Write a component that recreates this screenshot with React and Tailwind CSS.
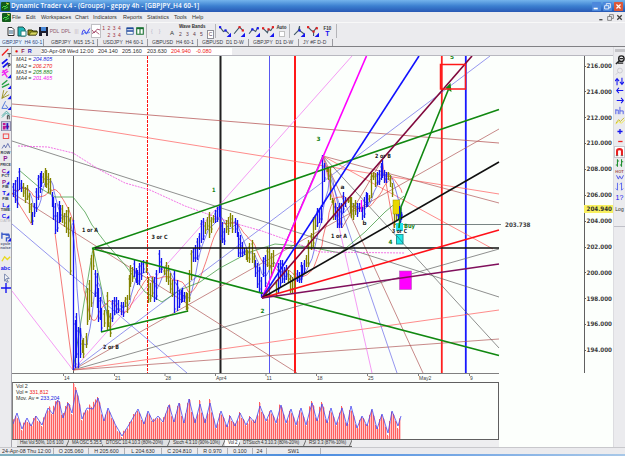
import React from 'react';

const MENUS = [
  { label: 'File', width: 'w-[14px]' },
  { label: 'Edit', width: 'w-[15px]' },
  { label: 'Workspaces', width: 'w-[34px]' },
  { label: 'Chart', width: 'w-[18px]' },
  { label: 'Indicators', width: 'w-[30px]' },
  { label: 'Reports', width: 'w-[24px]' },
  { label: 'Statistics', width: 'w-[27px]' },
  { label: 'Tools', width: 'w-[18px]' },
  { label: 'Help', width: 'w-[14px]' },
];

const TABS = [
  { label: 'GBPJPY  H4 60-1', width: 'w-[44px]', active: true },
  { label: 'GBPJPY  M15 15-1', width: 'w-[54px] pl-[7px]' },
  { label: 'USDJPY  H4 60-1', width: 'w-[50px] pl-[5px]' },
  { label: 'GBPUSD  H4 60-1', width: 'w-[50px] pl-[4px]' },
  { label: 'GBPUSD  D1 D-W', width: 'w-[51px] pl-[4px]' },
  { label: 'GBPJPY  D1 D-W', width: 'w-[50px] pl-[4px]' },
  { label: 'JY #F D-D', width: 'w-[34px] pl-[4px]' },
];

const B = '#1414f0';
const O = '#848400';
const M = '#ff00ff';

// x, high, low, colour
const BARS = [
  [13, 183, 197, B], [15, 180, 203, B], [17, 177, 208, B], [19, 168, 190, B], [21, 180, 192, B], [23, 183, 197, O],
  [25, 187, 203, O], [27, 185, 200, O], [29, 193, 213, O], [31, 203, 223, O], [32, 212, 225, B], [34, 203, 217, B],
  [36, 188, 212, B], [38, 175, 200, B], [40, 173, 193, B], [41, 171, 187, B], [43, 173, 183, O], [45, 168, 187, O],
  [46, 170, 188, O], [48, 173, 193, O], [50, 178, 194, O], [52, 192, 207, B], [53, 197, 220, B], [55, 203, 234, B],
  [57, 212, 232, B], [59, 201, 223, B], [60, 205, 222, B], [62, 205, 223, O], [64, 213, 227, O], [66, 210, 233, O],
  [68, 207, 237, O], [70, 217, 275, O], [73, 220, 370, B], [75, 320, 368, B], [76, 313, 358, B], [78, 327, 368, B],
  [80, 328, 358, B], [82, 340, 353, O], [83, 338, 358, O], [86, 333, 348, O], [87, 288, 325, O], [89, 280, 320, O],
  [91, 255, 307, O], [93, 248, 270, O], [95, 270, 297, B], [97, 273, 308, B], [98, 288, 322, B], [100, 297, 320, B],
  [101, 308, 332, B], [104, 310, 327, O], [107, 292, 330, O], [108, 310, 327, O], [110, 313, 337, O], [112, 300, 322, B],
  [114, 297, 315, B], [116, 297, 313, B], [118, 300, 313, B], [121, 302, 315, B], [123, 302, 317, B], [125, 297, 307, O],
  [127, 295, 313, O], [129, 275, 300, O], [130, 265, 287, O], [132, 267, 282, O], [134, 260, 277, B], [136, 268, 283, B],
  [137, 270, 285, B], [139, 263, 285, B], [141, 262, 280, B], [143, 260, 273, B], [146, 260, 273, O], [148, 277, 303, O],
  [150, 283, 302, O], [152, 277, 297, O], [154, 277, 302, B], [156, 270, 300, B], [159, 250, 273, B], [161, 258, 273, B],
  [164, 267, 275, O], [166, 262, 282, O], [168, 265, 285, O], [170, 273, 293, O], [172, 280, 297, O], [174, 270, 313, B],
  [177, 280, 311, B], [179, 290, 308, B], [181, 290, 303, B], [182, 288, 302, B], [184, 292, 302, B], [186, 292, 310, O],
  [187, 293, 312, O], [189, 270, 302, O], [191, 250, 280, O], [193, 248, 262, B], [195, 245, 262, B], [197, 238, 260, B],
  [199, 233, 250, B], [201, 220, 243, B], [203, 218, 240, B], [205, 222, 234, O], [207, 217, 230, O], [209, 212, 238, O],
  [211, 217, 233, O], [213, 215, 223, O], [215, 210, 223, B], [217, 207, 222, B], [219, 205, 217, B], [220, 204, 240, B],
  [222, 222, 243, B], [224, 228, 245, B], [226, 220, 233, O], [228, 217, 235, O], [230, 213, 227, O], [232, 215, 233, O],
  [235, 218, 233, B], [237, 220, 237, B], [238, 232, 257, B], [240, 235, 257, B], [242, 242, 257, B], [244, 248, 255, B],
  [246, 248, 260, O], [247, 250, 262, O], [249, 243, 263, O], [252, 240, 263, O], [254, 253, 267, O], [255, 260, 277, B],
  [257, 263, 288, B], [259, 267, 293, B], [261, 277, 297, B], [263, 257, 277, B], [265, 255, 287, B], [267, 247, 267, O],
  [269, 248, 270, O], [271, 253, 277, O], [273, 250, 267, O], [276, 280, 297, O], [278, 263, 293, B], [280, 260, 287, B],
  [282, 260, 283, B], [284, 267, 283, B], [286, 265, 280, B], [288, 270, 283, O], [290, 275, 293, O], [292, 277, 293, O],
  [294, 270, 290, O], [297, 270, 282, B], [299, 272, 283, B], [301, 262, 283, B], [302, 265, 277, B], [304, 260, 273, B],
  [306, 255, 267, O], [308, 240, 267, O], [311, 233, 250, O], [313, 217, 247, O], [315, 215, 230, O], [317, 208, 227, B],
  [319, 208, 223, B], [321, 205, 223, B], [322, 155, 207, B], [324, 163, 182, B], [327, 167, 172, O], [328, 167, 180, O],
  [330, 168, 200, O], [332, 198, 203, O], [333, 200, 220, O], [335, 203, 220, B], [337, 207, 228, B], [339, 203, 228, B],
  [341, 203, 228, B], [343, 192, 213, B], [345, 197, 207, B], [348, 197, 203, O], [350, 197, 213, O], [351, 197, 218, O],
  [353, 203, 220, O], [355, 200, 215, O], [357, 203, 217, B], [359, 203, 212, B], [361, 200, 212, M], [362, 207, 220, B],
  [364, 197, 218, B], [366, 192, 207, B], [367, 193, 207, B], [369, 195, 202, O], [371, 173, 198, O], [373, 172, 180, O],
  [375, 173, 187, O], [377, 172, 185, B], [379, 170, 185, B], [381, 163, 180, B], [382, 160, 178, B], [384, 170, 183, B],
  [386, 172, 183, B], [388, 172, 180, O], [390, 175, 187, O], [392, 183, 197, O], [394, 200, 228, O], [396, 203, 220, O],
  [398, 207, 220, B], [400, 208, 225, B], [401, 212, 220, B],
];

const average = (size) =>
  BARS.map((bar, i) => {
    const from = Math.max(0, i - size + 1);
    const part = BARS.slice(from, i + 1);
    const mid = part.reduce((sum, b) => sum + (b[1] + b[2]) / 2, 0) / part.length;
    return `${bar[0] + 1},${mid.toFixed(1)}`;
  }).join(' ');

// x1, y1, x2, y2, colour
const THIN_LINES = [
  [12, 104, 499, 143, '#b04848'],
  [12, 116, 499, 194, '#ff5a5a'],
  [12, 141, 499, 297, '#606060'],
  [12, 193, 297, 373, '#b05858'],
  [12, 224, 187, 373, '#6868e8'],
  [12, 291, 73, 370, '#f070f0'],
  [73, 370, 352, 56, '#f070f0'],
  [73, 370, 490, 56, '#6868e8'],
  [73, 370, 499, 129, '#b05858'],
  [73, 370, 499, 249, '#606060'],
  [73, 370, 499, 310, '#ff5a5a'],
  [73, 370, 499, 339, '#b05858'],
  [55, 233, 73, 370, '#f04040'],
  [73, 370, 93, 248, '#309030'],
  [93, 248, 111, 334, '#309030'],
  [12, 193, 32, 225, '#f04040'],
  [262, 298, 323, 155, '#309030'],
  [323, 156, 499, 348, '#606060'],
  [323, 156, 499, 203, '#b05858'],
  [323, 156, 493, 249, '#ff5a5a'],
  [323, 156, 423, 373, '#b05858'],
  [323, 156, 397, 373, '#6868e8'],
  [323, 156, 372, 373, '#f070f0'],
  [323, 156, 342, 228, '#f04040'],
  [342, 228, 382, 160, '#b04848'],
  [382, 160, 394, 228, '#f04040'],
  [395, 224.5, 501, 224.5, '#405050'],
];

const THICK_LINES = [
  [92, 248.5, 499, 109.5, '#108810'],
  [92, 248.5, 499, 355.5, '#108810'],
  [101, 332, 188, 311, '#108810'],
  [95, 248, 499, 248, '#101010'],
  [262, 298, 366.5, 56, '#ff00ff'],
  [262, 298, 419, 56, '#1010ff'],
  [262, 298, 472, 56, '#80083c'],
  [262, 298, 499, 162, '#101010'],
  [262, 298, 499, 230, '#ff1018'],
  [262, 298, 499, 264, '#80105c'],
  [399, 228, 401, 207, '#108810'],
  [401, 207, 449, 88, '#108810'],
];

const LABELS = [
  ['1 or A', 82, 232, 16, '#202020'],
  ['2 or B', 103, 349, 16, '#202020'],
  ['3 or C', 151.5, 238.5, 16, '#202020'],
  ['1', 212, 192, 3.5, '#108010'],
  ['2', 260.5, 313, 4, '#108010'],
  ['3', 316.5, 141, 4, '#108010'],
  ['a', 340.5, 189, 4, '#202020'],
  ['b', 362.5, 225, 4, '#202020'],
  ['1 or A', 331, 237.5, 16, '#202020'],
  ['2 or B', 375, 158, 16, '#202020'],
  ['3 or C', 392, 233, 15, '#202020'],
  ['4', 388.5, 243.5, 4, '#108010'],
  ['5', 450, 58.5, 4, '#108010'],
  ['Buy', 404, 228, 11, '#108010'],
];

const PRICES = [216, 214, 212, 210, 208, 206, 204, 202, 200, 198, 196, 194];

const DATES = [
  ['14', 64], ['21', 115], ['28', 165.5], ['Apr4', 216], ['11', 266.5],
  ['18', 317], ['25', 368], ['May2', 419], ['9', 470],
];

// x, y of the volume average
const VOLUME = [
  [13, 424], [17, 413], [22, 429], [27, 418], [31, 426], [36, 416], [42, 425], [48, 408], [53, 414], [57, 401],
  [59, 401], [63, 418], [68, 403], [72, 413], [76, 390], [78, 396], [82, 419], [87, 408], [93, 409], [98, 398],
  [104, 421], [108, 408], [115, 424], [122, 436], [130, 423], [138, 409], [144, 424], [148, 411], [153, 422], [158, 416],
  [163, 422], [169, 405], [174, 422], [179, 403], [184, 423], [189, 399], [195, 423], [200, 404], [205, 423], [210, 403],
  [216, 428], [221, 411], [227, 427], [230, 416], [235, 426], [240, 413], [246, 425], [250, 417], [255, 423], [260, 406],
  [266, 421], [271, 410], [276, 423], [281, 405], [286, 423], [291, 409], [296, 425], [301, 408], [306, 425], [312, 403],
  [317, 421], [322, 404], [327, 423], [331, 408], [336, 425], [342, 408], [347, 426], [351, 406], [357, 428], [362, 416],
  [367, 426], [372, 409], [377, 429], [382, 414], [388, 433], [392, 411], [398, 426], [401, 416],
];

const volumeAt = (x) => {
  const i = Math.max(1, VOLUME.findIndex((p) => p[0] >= x));
  const [x1, y1] = VOLUME[i - 1];
  const [x2, y2] = VOLUME[i];
  return y1 + ((y2 - y1) * (x - x1)) / (x2 - x1);
};

const VOLUME_BARS = Array.from({ length: 194 }, (_, i) => {
  const x = 13 + i * 2;
  const y = volumeAt(x + 1) + ((i * 7) % 5) - 2;
  return [x, x === 73 ? 383 : y < 410 ? y - 3 : y];
});

const INDICATOR_TABS = [
  { label: 'Hist Vol 50%, 10:6 100', width: 'w-[52px]' },
  { label: 'MA OSC 5.35.5', width: 'w-[34px]' },
  { label: 'DTOSC 10.4.10.3 (80%-20%)', width: 'w-[67px]' },
  { label: 'Stoch 4.3.10 (90%-10%)', width: 'w-[55px]' },
  { label: 'Vol 2', width: 'w-[15px]', active: true },
  { label: 'DTStoch 4.3.10.3 (80%-20%)', width: 'w-[66px]' },
  { label: 'RSI 3.3 (87%-10%)', width: 'w-[46px]' },
];

const STATUS = [
  { label: '24-Apr-08 Thu 12:00', width: 'w-[54px]' },
  { label: 'O 205.060', width: 'w-[35px]' },
  { label: 'H 205.600', width: 'w-[36px]' },
  { label: 'L 204.630', width: 'w-[37px]' },
  { label: 'C 204.810', width: 'w-[36px]' },
  { label: 'R 0.970', width: 'w-[30px]' },
  { label: '0.100', width: 'w-[25px]' },
  { label: '24', width: 'w-[14px]' },
  { label: 'SW1', width: 'w-[54px]' },
];

const Icon = ({ children, className = 'w-[11px] h-[11px]' }) => (
  <svg viewBox="0 0 11 11" className={`shrink-0 ${className}`} fill="none" strokeWidth="1">
    {children}
  </svg>
);

const Corner = () => <path d="M11 7v4H7z" fill="#1414f0" />;

const Logo = () => (
  <svg viewBox="0 0 9 9" className="w-[9px] h-[9px] shrink-0">
    <rect width="9" height="9" rx="1" fill="#145c1c" />
    <path d="M1 6l2-2 1 1 3-3M3 7l4-2" stroke="#48d848" fill="none" />
    <path d="M5 1l3 1" stroke="#d8d840" />
  </svg>
);

const TitleBar = () => (
  <div className="h-[12px] shrink-0 flex items-center bg-gradient-to-b from-[#74b4ec] via-[#3c80d0] to-[#2858b4] pr-[2px]">
    <div className="w-[11px] pl-[1px]"><Logo /></div>
    <div className="text-[6.5px] leading-[10px] font-semibold text-white whitespace-pre tracking-[0.04px] font-['Open_Sans',sans-serif]">
      Dynamic Trader v.4 - (Groups) - geppy 4h - [GBPJPY_H4 60-1]
    </div>
    <div className="ml-auto flex gap-[2px]">
      <Icon className="w-[9px] h-[9px]"><rect width="11" height="11" rx="1" fill="#4c88dc" /><path d="M2 8h5" stroke="#fff" strokeWidth="2" /></Icon>
      <Icon className="w-[9px] h-[9px]"><rect width="11" height="11" rx="1" fill="#4c88dc" /><path d="M4 4V2h5v5H7M2 4.500h5v4H2z" stroke="#fff" /></Icon>
      <Icon className="w-[9px] h-[9px]"><rect width="11" height="11" rx="1" fill="#dc5838" /><path d="M3 3l5 5M8 3l-5 5" stroke="#fff" strokeWidth="1.500" /></Icon>
    </div>
  </div>
);

const MenuBar = () => (
  <div className="h-[10px] shrink-0 flex items-center text-[5.5px] leading-[8px] text-[#303030] pr-[2px]">
    <div className="w-[12px] pl-[2px]"><Logo /></div>
    {MENUS.map((m) => (
      <div key={m.label} className={`${m.width} shrink-0 whitespace-nowrap`}>{m.label}</div>
    ))}
    <div className="ml-auto flex gap-[2px]">
      <Icon className="w-[7px] h-[7px]"><path d="M2 9h5" stroke="#404040" strokeWidth="2" /></Icon>
      <Icon className="w-[7px] h-[7px]"><path d="M4 4V1h6v6H8M1 4h6v6H1z" stroke="#505050" /></Icon>
      <Icon className="w-[7px] h-[7px]"><path d="M2 2l7 7M9 2L2 9" stroke="#404040" strokeWidth="2" /></Icon>
    </div>
  </div>
);

const Divider = () => <div className="w-px h-[14px] bg-[#b4b4b8] shrink-0"></div>;

const WaveIcon = ({ d, dots, color = '#1414f0' }) => (
  <Icon className="w-[12px] h-[12px]">
    <path d={d} stroke="#405868" />
    {dots.map(([x, y]) => <rect key={x} x={x - 1} y={y - 1} width="2" height="2" fill={color} />)}
    <Corner />
  </Icon>
);

const Toolbar = () => (
  <div className="h-[17px] shrink-0 flex items-center text-[5px] leading-[6px] text-[#303030] border-t border-[#f8f8f8]">
    <div className="w-[122px] h-[15px] shrink-0 flex items-center">
      <div className="w-[5px] shrink-0"></div>
      <Icon><path d="M3 1.500h4l2 2v6H3z" fill="#fff" stroke="#303030" /><path d="M4 5h4M4 7h4" stroke="#306080" /></Icon>
      <Icon><path d="M2 1h5l2 2v7H2z" fill="#20b8b8" stroke="#205050" /><path d="M5 5h5v5H5z" fill="#fff" stroke="#208080" /></Icon>
      <Icon><path d="M1 9V4h4l1 1h4L9 9z" fill="#8c8c10" stroke="#383808" /><path d="M2 9l2-3h7L9 9z" fill="#d8d860" stroke="#383808" strokeWidth=".6" /></Icon>
      <Icon><path d="M1 1h9v9H1z" fill="#202030" /><path d="M3 1h5v4H3z" fill="#4888d8" /><path d="M4 7h4v3H4z" fill="#e8e8e8" /></Icon>
      <div className="w-[11px] shrink-0 text-center text-[#906070]">PDL</div>
      <div className="w-[12px] shrink-0 text-center text-[#906070]">DPL</div>
      <div className="w-[9px] shrink-0 text-center text-[#c0b0b8]">|||</div>
      <Icon className="w-[10px] h-[11px]"><path d="M1 9c1-7 3-6 4-2s3-4 5-5" stroke="#1414f0" /><path d="M2 9c2-5 4 0 8-3" stroke="#4070f0" /></Icon>
      <div className="bg-white border border-[#c0c0c4] shrink-0">
        <Icon className="w-[8px] h-[12px]"><path d="M0 4l3 4 4-5 4 1M0 9l5-3 5 4" stroke="#902048" /></Icon>
      </div>
      <div className="w-[21px] shrink-0 grid grid-cols-4 gap-y-px text-center text-[#a03040]">
        <span>1</span><span>2</span><span>3</span><span>4</span>
        <span></span><span>2</span><span>3</span><span>4</span>
      </div>
    </div>
    <Icon className="ml-[4px] w-[8px] h-[10px]"><path d="M1 1h9v9H1z" fill="#fff" stroke="#184890" /><path d="M1 2h9M1 5.500h9" stroke="#2048a0" strokeWidth="2" /></Icon>
    <Icon className="ml-[2px] w-[8px] h-[10px]"><path d="M1 1h9v9H1zM5.500 1v9" fill="#fff" stroke="#187030" strokeWidth="1.500" /><path d="M1 2h9" stroke="#187030" strokeWidth="2" /></Icon>
    <div className="ml-[2px]"><Divider /></div>
    <div className="w-[23px] shrink-0 pl-[4px] text-[#b0b0c8] flex gap-[6px]"><span>{'{'}</span><span>{'}'}</span></div>
    <div className="w-[9px] shrink-0 text-[6px] pt-[4px]">A</div>
    <div className="w-[36px] shrink-0">
      <div className="whitespace-nowrap leading-[6px] font-bold text-[4.5px]">Wave Bands</div>
      <div className="flex items-center leading-[7px] text-[#603848]">
        <span className="w-[7px]">2</span><span className="w-[7px]">3</span><span className="w-[7px]">4</span><span className="w-[7px]">5</span>
        <span className="w-[7px] text-center bg-white border border-[#909098]">C</span>
      </div>
    </div>
    <div className="h-[15px] shrink-0 flex items-center gap-[2.500px]">
      <Divider />
      <WaveIcon d="M1 2l3 4 2-1 3 3" dots={[[1, 2], [6, 5]]} />
      <WaveIcon d="M1 8l5-6 3 3" dots={[[6, 2], [9, 5]]} color="#e02020" />
      <WaveIcon d="M1 8l3-4 3 2 2-4" dots={[[4, 4], [9, 3]]} />
      <WaveIcon d="M1 3l4 4 1-3 2 1 2-3" dots={[[1, 3], [6, 4], [10, 2]]} color="#e02020" />
      <div className="w-[10px] flex flex-col items-center font-bold text-[4.5px]">
        Auto
        <div className="w-[6px] h-[6px] bg-white border border-[#c0c0c0]"></div>
      </div>
      <Divider />
      <WaveIcon d="M1 9l4-4 1-4v4l4 3" dots={[[6, 5]]} />
      <WaveIcon d="M1 2l3 3 2 1 3-4M6 6v4" dots={[[1, 2], [6, 6], [9, 3]]} color="#e02020" />
      <div className="w-[12px] flex flex-col items-center font-bold text-[4.5px] leading-[5px]">
        F10
        <span className="text-[7px] leading-[6px] text-[#1414f0]">T</span>
      </div>
      <Divider />
    </div>
  </div>
);

const ChartTabs = () => (
  <div className="h-[8px] shrink-0 flex text-[5px] leading-[7px] text-[#404048] border-b border-[#808084]">
    {TABS.map((t) => (
      <div
        key={t.label}
        className={`${t.width} shrink-0 whitespace-pre overflow-hidden border-r border-[#9a9aa0] ${t.active ? 'bg-[#e4f0fc] text-[#384878] pl-[2px]' : ''}`}
      >
        {t.label}
      </div>
    ))}
  </div>
);

const InfoRow = () => (
  <div className="h-[9px] shrink-0 flex items-center text-[5.5px] leading-[7px] text-[#303030] border-b border-[#b8b8c0]">
    <div className="w-[29px] pl-[3px] flex gap-[3px] font-bold">
      <span className="text-[#e01010]">●</span><span className="text-[#901848]">F</span><span className="text-[#1818c0]">R</span>
    </div>
    <div className="w-[191px] h-[7px] flex bg-white whitespace-nowrap">
      <span className="w-[57px]">30-Apr-08 Wed 12:00</span>
      <span className="w-[24px]">204.140</span>
      <span className="w-[25px]">205.160</span>
      <span className="w-[24px]">203.630</span>
      <span className="w-[25px] text-[#f02020]">204.940</span>
      <span className="text-[#f02020]">-0.080</span>
    </div>
  </div>
);

const LeftTools = () => (
  <div className="w-[12px] shrink-0 flex flex-col items-center border-r border-[#a8a8b0] font-bold text-[4px] leading-[6px] text-[#303848] [&>*]:shrink-0">
    <Icon className="w-[10px] h-[10.500px]"><path d="M1 9l7-7" stroke="#f02020" strokeWidth="1.500" /><path d="M7 7h4M9 7v4" stroke="#303030" /></Icon>
    <Icon className="w-[10px] h-[10.500px]"><path d="M1 6l6-5M2 10l6-5" stroke="#1414f0" strokeWidth="2" /><path d="M8 10V6h2v2H8" stroke="#303030" /></Icon>
    <Icon className="w-[10px] h-[10.500px]"><path d="M1 5l6-4M1 8l7-5M2 2l5 8" stroke="#f020f0" strokeWidth="1.500" /><Corner /></Icon>
    <Icon className="w-[10px] h-[10.500px]"><path d="M1 6l6-5M1 9l8-4" stroke="#20a040" strokeWidth="1.500" /><Corner /></Icon>
    <Icon className="w-[10px] h-[10.500px]"><path d="M1 10L3 1M1 10l6-8M1 10l8-4" stroke="#98901c" /><Corner /></Icon>
    <Icon className="w-[10px] h-[10.500px]"><path d="M1 9l4-8M1 9h6M5 5l3 4" stroke="#4870d8" /><Corner /></Icon>
    <Icon className="w-[10px] h-[10.500px]"><path d="M1 6l5-5 4 4M1 8l5-5 3 3" stroke="#40a8a0" /><path d="M7 10V6h2v4" stroke="#303030" /></Icon>
    <Icon className="w-[10px] h-[10.500px]"><rect x=".5" y=".5" width="10" height="10" fill="#d8d8ec" stroke="#8080a0" /><path d="M2 3h3M2 6h7M2 8h3" stroke="#c01890" strokeWidth="2" /><path d="M7 2v7" stroke="#2020c0" strokeWidth="2" /></Icon>
    <Icon className="w-[10px] h-[10.500px]"><rect x="2.500" y="3" width="6" height="5" stroke="#f04040" /></Icon>
    <Icon className="w-[10px] h-[8px]"><path d="M0 9l3-5 2 4 3-6 3 6" stroke="#4050a0" /></Icon>
    <div className="h-[6px]">ROW</div>
    <div className="h-[6px] text-[6.500px] text-[#901890]">P</div>
    <div className="h-[6px] text-[3.500px]">PRICE</div>
    <div className="h-[5px] text-[6px] text-[#901890]">C<span className="text-[4px] text-[#1414f0]">◢</span></div>
    <div className="h-[6px]">PCT</div>
    <div className="h-[5px] text-[6px] text-[#901890]">P<span className="text-[4px] text-[#1414f0]">◢</span></div>
    <div className="h-[6px]">FIB</div>
    <div className="h-[6px] text-[6px] text-[#1414f0]">T<span className="text-[4px]">◢</span></div>
    <div className="h-[6px]">FIB</div>
    <div className="h-[5px] text-[6px] text-[#1414f0]">L<span className="text-[4px]">◢</span></div>
    <div className="h-[6px]">TIME</div>
    <div className="h-[5px] text-[6px] text-[#1414f0]">C<span className="text-[4px]">◢</span></div>
    <div className="h-[6px] text-[#b8b8c0] font-normal">DATE</div>
    <Icon className="mt-[7px] w-[10px] h-[11px]"><path d="M1 1v7M1 3h8M5 4h4v3H6v4" stroke="#3858c8" strokeWidth="1.500" /><Corner /></Icon>
    <div className="leading-[4px] text-center text-[#505878]">cycle<br />noise</div>
    <Icon className="mt-[4px] w-[10px] h-[10px]"><path d="M1 8l3-5 3 3 3-3" stroke="#e8d820" strokeWidth="1.500" /></Icon>
    <div className="text-[5.500px] leading-[9px] text-[#1414f0]">abc</div>
    <Icon className="w-[10px] h-[10px]"><path d="M4 1l5 5H6l2 4-2 0-1-3-1 2z" fill="#fff" stroke="#7080a8" /></Icon>
    <Icon className="w-[10px] h-[10px]"><path d="M5.500 0v11M0 5.500h11" stroke="#1414f0" strokeWidth="1.500" /></Icon>
  </div>
);

const RightTools = () => (
  <div className="w-[12px] shrink-0 flex flex-col items-center border-l border-[#dcdce0] pt-[2px] text-[5px] leading-[7px] font-bold text-[#1414f0] [&>*]:shrink-0">
    <div className="w-[10px] h-[3px] bg-[#c4c4c8]"></div>
    <Icon className="mt-[3px] w-[10px] h-[10px]"><circle cx="7" cy="4" r="3" stroke="#202020" strokeWidth="1.500" /><path d="M5 6l-4 4M5 4h4M3 9h6" stroke="#202020" strokeWidth="1.500" /></Icon>
    <Icon className="mt-px w-[9px] h-[10px]"><circle cx="6" cy="5" r="3" stroke="#c4c4cc" /><path d="M4 7l-3 3" stroke="#c4c4cc" /></Icon>
    <Icon className="mt-[1px] w-[9px] h-[9px]"><path d="M2.500 10V2M0 5l2.500-3L5 5M8.500 1v8M6 6l2.500 3L11 6" stroke="#1414f0" strokeWidth="1.300" /></Icon>
    <Icon className="w-[8px] h-[9px]"><path d="M10 5.500H1M4 2L1 5.500 4 9" stroke="#1414f0" strokeWidth="1.500" /></Icon>
    <Icon className="mt-px w-[8px] h-[9px]"><path d="M1 5.500h9M7 2l3 3.500L7 9" stroke="#1414f0" strokeWidth="1.500" /></Icon>
    <Icon className="mt-px w-[9px] h-[9px]"><path d="M1 4v6M1 5h3v5M6 1v9M6 6h4v4" stroke="#3848e8" /></Icon>
    <Icon className="mt-px w-[10px] h-[10px]"><path d="M1 8l3-4 2 2 4-4" stroke="#c8b820" /><path d="M1 9l3-3 3 2 4-4" stroke="#f0e848" /></Icon>
    <Icon className="w-[8px] h-[11px]"><path d="M5.500 2v7M2 5.500h7" stroke="#1414f0" strokeWidth="1.800" /></Icon>
    <Icon className="w-[8px] h-[9px]"><path d="M3 5.500h6" stroke="#f02020" strokeWidth="1.800" /></Icon>
    <div className="bg-white border border-[#c8c8d0]">
      <Icon className="w-[9px] h-[10px]"><path d="M2.500 10V4q0-2 3-2t3 2v6" stroke="#e82020" strokeWidth="2.500" /><path d="M1 10h3M7 10h3" stroke="#606060" /></Icon>
    </div>
    <Icon className="w-[9px] h-[10px]"><path d="M3 1v9M1 8h2M3 3h2M8 1v9M6 8h2M8 4h2" stroke="#209030" strokeWidth="1.300" /></Icon>
    <div className="mt-px leading-[5px] h-[5px] text-[4px] text-[#a05050]">HOT</div>
    <Icon className="w-[10px] h-[7px]"><path d="M0 2l3 6 2-5 3 5 3-6" stroke="#5058e8" strokeWidth="1.500" /></Icon>
    <Icon className="w-[9px] h-[11px]"><path d="M3 1v9M1 8l2 2M8 1v9M8 10l2-2M6 3l2-2" stroke="#4050f0" /></Icon>
    <div className="text-[7px] leading-[12px] font-normal">1?</div>
    <div className="mt-[2px] text-[5px] font-normal text-[#303030]">Log</div>
    <div className="mt-[13px] w-full h-px bg-[#c0c0c8]"></div>
  </div>
);

const PriceChart = () => (
  <svg viewBox="12 56 601 326" className="block w-[601px] h-[326px] shrink-0 font-['DejaVu_Sans_Condensed','DejaVu_Sans',sans-serif]" fill="none">
    {/* Cycle lines */}
    <path d="M73.500 56v317" stroke="#606060" />
    <path d="M147.500 56v317" stroke="#ff1010" strokeDasharray="3 1" />
    <path d="M220.500 56v317" stroke="#202020" strokeWidth="2" />
    <path d="M269.500 56v317" stroke="#5858f0" />
    <path d="M295 56v317" stroke="#ff1818" strokeWidth="2" />
    <path d="M441.800 56v317" stroke="#ff2020" strokeWidth="1.800" />
    <path d="M465.800 56v317" stroke="#1818ff" strokeWidth="1.800" />

    {THIN_LINES.map(([x1, y1, x2, y2, color], i) => (
      <line key={i} x1={x1} y1={y1} x2={x2} y2={y2} stroke={color} strokeWidth="0.7" />
    ))}

    {/* Moving averages */}
    <polyline points={average(5)} stroke="#4848e8" strokeWidth="0.7" />
    <polyline points={average(12)} stroke="#f04040" strokeWidth="0.7" />
    <path
      d="M19 170L40 188L55 197L73 197L85 212L92 225L105 242L125 265L145 292L162 302L180 290L200 282L220 268L250 252L275 244L310 247L340 253L365 232L385 212L404 196"
      stroke="#309030"
      strokeWidth="0.7"
    />
    <path
      d="M18 146L48 147L73 153L100 170L125 183L150 190L185 206L230 222L262 231L290 241L320 252L405 253"
      stroke="#f050e0"
      strokeWidth="0.8"
      strokeDasharray="2 1"
    />

    {/* Price bars */}
    {BARS.map(([x, high, low, color]) => (
      <path key={x} d={`M${x + 0.5} ${high}V${low}M${x - 0.5} ${high + 4}h1M${x + 0.5} ${low - 4}h1`} stroke={color} strokeWidth="1.300" />
    ))}

    {/* Signal boxes */}
    <rect x="393" y="200" width="6.500" height="14" fill="#e8d800" stroke="#a09000" strokeWidth="0.500" />
    <path d="M399.500 206v18M396 215h7" stroke="#1414f0" />
    <rect x="396" y="223" width="7" height="8" fill="#20e0f0" />
    <rect x="396.500" y="234.500" width="6.500" height="9.500" fill="#20e8e8" stroke="#209898" />
    <path d="M397 236l6 7" stroke="#207070" strokeWidth="0.700" />
    <rect x="399.500" y="271" width="12" height="18.500" fill="#ff00ff" stroke="#b060b0" strokeWidth="0.600" />

    {THICK_LINES.map(([x1, y1, x2, y2, color], i) => (
      <line key={i} x1={x1} y1={y1} x2={x2} y2={y2} stroke={color} strokeWidth="1.600" />
    ))}
    <path d="M450.500 83l-5 5 6 4z" fill="#108810" />
    <rect x="440.500" y="64.500" width="25" height="24.500" stroke="#ff1818" strokeWidth="1.500" />

    {LABELS.map(([text, x, y, width, color]) => (
      <text key={`${text}${x}`} x={x} y={y} textLength={width} lengthAdjust="spacingAndGlyphs" fontSize="5.800" fontWeight="bold" fill={color}>
        {text}
      </text>
    ))}

    <g fontSize="5.300" fontStyle="italic" fill="#303030" className="font-['Liberation_Sans',sans-serif]">
      <text x="16" y="61">MA1 = <tspan fill="#2020e0">204.805</tspan></text>
      <text x="16" y="67.500">MA2 = <tspan fill="#f02020">206.270</tspan></text>
      <text x="16" y="74">MA3 = <tspan fill="#108010">205.880</tspan></text>
      <text x="16" y="80">MA4 = <tspan fill="#f020f0">201.465</tspan></text>
    </g>

    {/* Date axis */}
    <path d="M12 373.500h487" stroke="#808080" />
    {DATES.map(([label, x]) => (
      <g key={label}>
        <path d={`M${x - 0.5} 373v3`} stroke="#808080" />
        <text x={x} y="379.800" fontSize="5" fill="#404040" className="font-['Liberation_Sans',sans-serif]">{label}</text>
      </g>
    ))}

    {/* Price axis */}
    <path d="M584.500 56v317" stroke="#606060" />
    <rect x="584" y="205" width="29" height="8" fill="#f8f060" />
    {PRICES.map((p) => {
      const y = 65.5 + (216 - p) * 12.93;
      return (
        <g key={p}>
          <path d={`M584 ${Math.round(y)}.5h2`} stroke="#606060" />
          <text x="586.500" y={y + 2.3} textLength="25.500" lengthAdjust="spacingAndGlyphs" fontSize="6.200" fontWeight="bold" fill="#404040">
            {p.toFixed(3)}
          </text>
        </g>
      );
    })}
    <text x="586.500" y="211.200" textLength="25.500" lengthAdjust="spacingAndGlyphs" fontSize="6.200" fontWeight="bold" fill="#303030">204.940</text>
    <text x="505" y="226.800" textLength="25.500" lengthAdjust="spacingAndGlyphs" fontSize="6.200" fontWeight="bold" fill="#404040">203.738</text>
  </svg>
);

const VolumeChart = () => (
  <div className="w-[487px] h-[58px] border border-[#606060] border-l-[#808080] shrink-0">
    <svg viewBox="13 383 485 56" className="block w-[485px] h-[56px] font-['Liberation_Sans',sans-serif]" fill="none">
      {VOLUME_BARS.map(([x, y]) => (
        <g key={x}>
          <path d={`M${x + 1} ${y + 1}V439`} stroke="#ffc8c8" strokeWidth="2" />
          <path d={`M${x + 0.5} ${y}V439`} stroke="#ff6060" />
        </g>
      ))}
      <polyline points={VOLUME.map((p) => p.join(',')).join(' ')} stroke="#4848f0" strokeWidth="0.800" />
      <g fontSize="5.300" fill="#303030">
        <text x="16" y="387.800">Vol 2</text>
        <text x="16" y="393.800">Vol = <tspan fill="#f02020">331,812</tspan></text>
        <text x="16" y="400">Mov. Av = <tspan fill="#2020e0">233,204</tspan></text>
      </g>
    </svg>
  </div>
);

const IndicatorTabs = () => (
  <div className="w-[487px] h-[7px] flex pl-[5px] bg-[#eeeef0] text-[4.500px] leading-[6px] text-[#303030]">
    {INDICATOR_TABS.map((t) => (
      <div
        key={t.label}
        className={`${t.width} shrink-0 whitespace-nowrap pl-[3px] tracking-[-0.1px] border-b border-[#606060] ${t.active ? 'bg-white' : 'bg-[#e0e0e2]'} flex justify-between`}
      >
        {t.label}
        <svg viewBox="0 0 3 6" className="w-[3px] h-[6px] shrink-0"><path d="M3 0L0.500 6" stroke="#505050" strokeWidth="0.800" /></svg>
      </div>
    ))}
  </div>
);

const StatusBar = () => (
  <div className="h-[7px] shrink-0 flex text-[5.300px] leading-[7px] text-[#303030] border-t border-[#c8c8cc]">
    {STATUS.map((s) => (
      <div key={s.label} className={`${s.width} shrink-0 whitespace-nowrap border-r border-[#b0b0b4] text-center`}>{s.label}</div>
    ))}
  </div>
);

const App = () => {
  return (
    <div className="w-[625px] h-[456px] flex flex-col overflow-hidden bg-[#ebebee] font-['Liberation_Sans',sans-serif]">
      <TitleBar />
      <MenuBar />
      <Toolbar />
      <ChartTabs />
      <div className="flex h-[400px] shrink-0">
        <LeftTools />
        <div className="w-[601px] shrink-0 flex flex-col">
          <InfoRow />
          <div className="h-[391px] bg-[#fcfffc]">
            <PriceChart />
            <VolumeChart />
            <IndicatorTabs />
          </div>
        </div>
        <RightTools />
      </div>
      <StatusBar />
      <div className="h-[2px] shrink-0 bg-gradient-to-r from-[#80b0c0] via-[#4c8ce0] to-[#a8c8e8]"></div>
    </div>
  );
};

export default App;
